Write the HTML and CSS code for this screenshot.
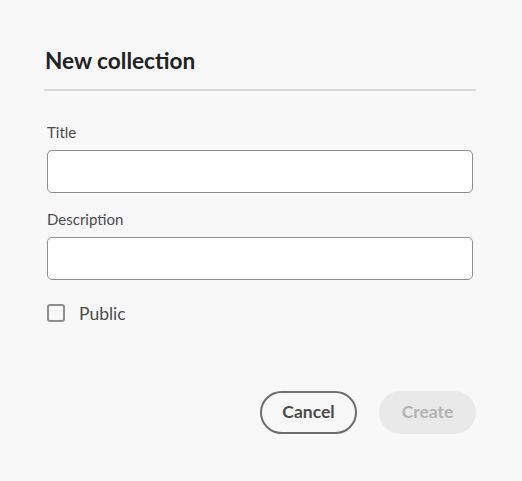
FILE: index.html
```html
<!DOCTYPE html>
<html lang="en">
<head>
<meta charset="utf-8">
<title>New collection</title>
<link rel="stylesheet" href="styles.css">
</head>
<body>
<div class="dialog">
  <h2 class="heading">New collection</h2>
  <div class="divider"></div>
  <form class="form">
    <label class="field">
      <span class="label">Title</span>
      <input class="input" type="text">
    </label>
    <label class="field field-desc">
      <span class="label">Description</span>
      <input class="input" type="text">
    </label>
    <label class="check">
      <span class="box"></span>
      <span class="check-text">Public</span>
    </label>
  </form>
  <div class="actions">
    <button class="btn btn-secondary" type="button">Cancel</button>
    <button class="btn btn-primary" type="button" disabled>Create</button>
  </div>
</div>
</body>
</html>
```

FILE: styles.css
```css
html, body {
  margin: 0;
  padding: 0;
  background: #f8f8f8;
}
body {
  font-family: "Source Sans Pro", "Lato", "Open Sans", sans-serif;
  color: #222222;
}
.dialog {
  width: 432px;
  padding: 47px 0 0 44px;
  display: flex;
  flex-direction: column;
}
.heading {
  margin: 0;
  font-size: 22.6px;
  line-height: 28px;
  font-weight: 700;
  color: #222222;
  padding-left: 1px;
}
.divider {
  margin-top: 14px;
  height: 2px;
  background: #d9d9d9;
}
.form {
  margin: 31px 3px 0 3px;
  display: flex;
  flex-direction: column;
}
.field {
  display: flex;
  flex-direction: column;
}
.field-desc {
  margin-top: 16px;
}
.label {
  font-size: 15px;
  line-height: 20px;
  color: #4b4b4b;
  margin-bottom: 8px;
}
.input {
  box-sizing: border-box;
  height: 43px;
  width: 100%;
  border: 1px solid #8e8e8e;
  border-radius: 5px;
  background: #ffffff;
  margin: 0;
  padding: 0 12px;
  font: inherit;
}
.check {
  margin-top: 17px;
  height: 32px;
  display: flex;
  align-items: center;
  gap: 14px;
}
.box {
  box-sizing: border-box;
  width: 18px;
  height: 18px;
  border: 2px solid #8e8e8e;
  border-radius: 3px;
  background: #f8f8f8;
}
.check-text {
  font-size: 17.5px;
  color: #4b4b4b;
}
.actions {
  margin-top: 62px;
  display: flex;
  justify-content: flex-end;
  gap: 22px;
}
.btn {
  box-sizing: border-box;
  width: 97px;
  height: 43px;
  border-radius: 22px;
  font-family: inherit;
  font-size: 17.5px;
  font-weight: 700;
  padding: 0 0 2px 0;
}
.btn-secondary {
  background: transparent;
  border: 2px solid #6e6e6e;
  color: #4b4b4b;
}
.btn-primary {
  background: #e9e9e9;
  border: none;
  color: #b3b3b3;
}
```
